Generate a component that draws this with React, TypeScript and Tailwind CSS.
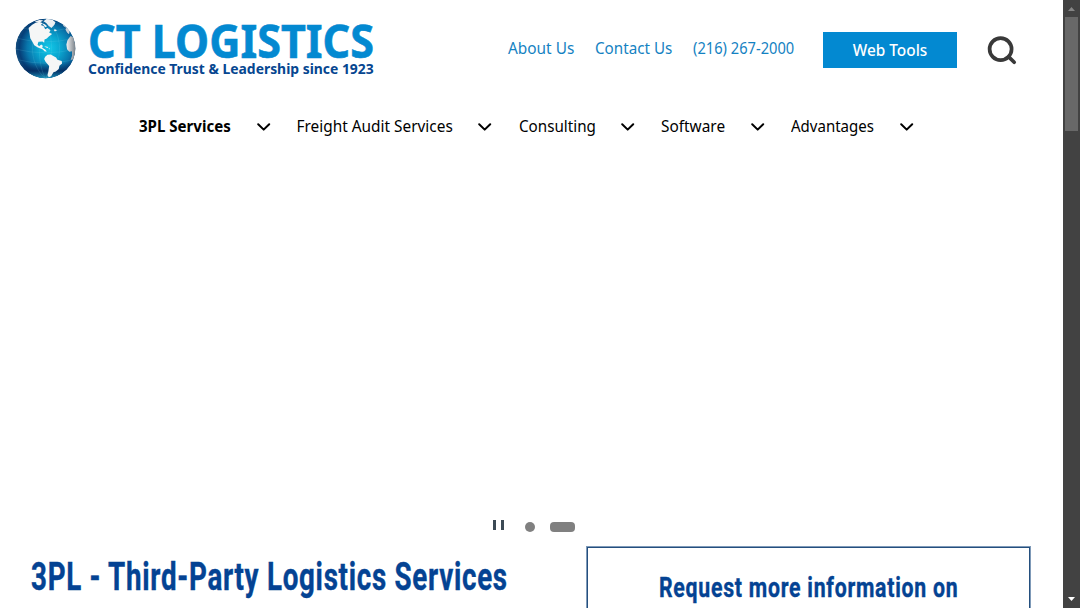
import { useLayoutEffect, useRef, useState } from "react";

/** Condenses or widens a line of text so that it fills its box exactly. */
function FitText({ text, className }: { text: string; className: string }) {
  const box = useRef<HTMLSpanElement>(null);
  const line = useRef<HTMLSpanElement>(null);
  const [scale, setScale] = useState(1);
  useLayoutEffect(() => {
    if (box.current && line.current) {
      setScale(box.current.clientWidth / line.current.offsetWidth);
    }
  }, [text]);
  return (
    <span ref={box} className={`block shrink-0 whitespace-nowrap ${className}`}>
      <span ref={line} className="inline-block origin-left align-top" style={{ transform: `scaleX(${scale})` }}>
        {text}
      </span>
    </span>
  );
}

function Globe() {
  return (
    <svg viewBox="17 23 182 184" className="h-[61px] w-[61px] shrink-0" aria-hidden="true">
      <defs>
        <radialGradient id="sea" cx="0.56" cy="0.49" r="0.56">
          <stop offset="0" stopColor="#12c8e8" />
          <stop offset="0.35" stopColor="#0aa5cf" />
          <stop offset="0.65" stopColor="#0876ac" />
          <stop offset="0.88" stopColor="#063f78" />
          <stop offset="1" stopColor="#174f7d" />
        </radialGradient>
        <linearGradient id="rim" x1="0" y1="0" x2="0" y2="1">
          <stop offset="0.72" stopColor="#042b61" stopOpacity="0" />
          <stop offset="0.87" stopColor="#04285c" stopOpacity="0.8" />
          <stop offset="1" stopColor="#209dc3" />
        </linearGradient>
        <linearGradient id="africa" x1="0" y1="0" x2="1" y2="0">
          <stop offset="0" stopColor="#f1f1f1" />
          <stop offset="1" stopColor="#68727b" />
        </linearGradient>
        <clipPath id="ball">
          <circle cx="108" cy="115" r="90" />
        </clipPath>
      </defs>
      <g clipPath="url(#ball)">
        <circle cx="108" cy="115" r="91" fill="url(#sea)" />
        <circle cx="108" cy="115" r="91" fill="url(#rim)" />
        <g fill="none" stroke="#7ed8ed" strokeOpacity="0.3" strokeWidth="1.5">
          <path d="M108 24C84 64 82 158 108 206M108 24C58 64 53 158 108 206M108 24C130 64 134 158 108 206M108 24C161 64 168 158 108 206M21 84Q108 106 195 84M18 117Q108 139 198 117M25 149Q108 170 191 149M42 54Q108 72 174 54" />
        </g>
        <path fill="#f5f6f6" d="M57 53L68 43L78 37L90 34L99 39L94 44L103 48L107 57L114 53L123 60L119 67L128 71L118 79L112 85L105 88L104 98L99 94L87 95L84 104L89 108L95 103L100 107L98 113L107 118L112 124L106 124L99 117L85 112L74 105L68 94L62 84L60 70Z" />
        <path fill="#edf0f2" d="M75 34L89 29L101 30L94 35L83 36ZM102 33L111 26L127 27L138 36L135 43L126 53L118 47L110 38ZM97 39L106 42L113 48L107 51ZM133 58L140 58L142 62L135 63Z" />
        <path fill="#f6f6f6" d="M107 140L114 134L124 133L133 138L140 142L144 149L157 153L158 160L150 167L148 177L139 184L132 187L125 199L118 202L114 196L117 183L119 168L108 155L104 147Z" />
        <path fill="url(#africa)" d="M184 77L179 83L174 91L171 103L173 117L180 125L188 123L188 137L184 150L195 147L202 113L198 85Z" />
        <path fill="#c8d0d7" d="M159 39L165 42L173 51L181 62L179 72L173 67L168 58L171 53L162 47Z" />
        <path fill="#e3edf0" d="M104 108L114 110L117 114L110 112ZM118 115L122 115L120 118Z" />
      </g>
    </svg>
  );
}

function Chevron() {
  return (
    <svg viewBox="0 0 14 8" className="h-2 w-3.5 shrink-0" fill="none" stroke="#000" strokeWidth="2" strokeLinecap="round" strokeLinejoin="round">
      <path d="M1.2 1.2L6.7 6.6L12.2 1.2" />
    </svg>
  );
}

const menu = [
  { label: "3PL Services", item: "w-[157.5px]", text: "w-[92px] font-bold" },
  { label: "Freight Audit Services", item: "w-[222px]", text: "w-[156px]" },
  { label: "Consulting", item: "w-[142.5px]", text: "w-[77px]" },
  { label: "Software", item: "w-[130px]", text: "w-[64px]" },
  { label: "Advantages", item: "w-[123px]", text: "w-[83px]" },
];

export default function App() {
  return (
    <div className="flex h-[608px] w-[1080px] overflow-hidden bg-white font-['Noto_Sans',sans-serif]">
      <main className="flex w-[1063px] flex-col">
        <header className="flex h-[100px] shrink-0 items-start pl-[15px]">
          <a href="#" className="flex w-[493px] pt-[17.5px]">
            <Globe />
            <span className="ml-3 block pt-[2.5px]">
              <FitText
                text="CT LOGISTICS"
                className="w-[286px] text-[46px] leading-[41px] font-bold text-[#0389d1] [-webkit-text-stroke:0.6px_#0389d1]"
              />
              <FitText text="Confidence Trust & Leadership since 1923" className="w-[286px] text-[13.5px] leading-[17px] font-bold text-[#064690]" />
            </span>
          </a>
          <nav className="flex h-[98px] items-center gap-[21px] text-[15.4px] leading-6 text-[#1482c2]">
            <FitText text="About Us" className="w-[65.5px]" />
            <FitText text="Contact Us" className="w-[77px]" />
            <FitText text="(216) 267-2000" className="w-[100.5px]" />
          </nav>
          <button className="mt-8 ml-[30px] flex h-9 w-[134px] items-center justify-center bg-[#0389d1] pt-0.5 text-[15.4px] font-medium text-white">
            <FitText text="Web Tools" className="w-[75px]" />
          </button>
          <svg viewBox="0 0 30 30" className="mt-[35px] ml-[30px] h-[30px] w-[30px]" fill="none" stroke="#393939" strokeLinecap="round">
            <circle cx="13.6" cy="14.1" r="11" strokeWidth="3.7" />
            <path d="M21.7 21.9L27.2 27.3" strokeWidth="3.7" />
          </svg>
        </header>

        <nav className="flex h-[53px] shrink-0 items-center pl-[139px] text-[15.4px] leading-6 text-black">
          {menu.map((m) => (
            <div key={m.label} className={`flex shrink-0 items-center gap-[25.5px] ${m.item}`}>
              <FitText text={m.label} className={m.text} />
              <Chevron />
            </div>
          ))}
        </nav>

        <section className="flex grow items-end justify-center">
          <div className="mb-[15px] ml-[5px] flex h-3 w-[82px] items-center">
            <div className="flex w-[11px] justify-between">
              <span className="h-[10px] w-[3px] bg-[#3c4a55]" />
              <span className="h-[10px] w-[3px] bg-[#3c4a55]" />
            </div>
            <span className="mt-[3px] ml-[21px] size-[10px] rounded-full bg-[#808080]" />
            <span className="mt-[3px] ml-[15px] h-[10px] w-[25px] rounded-[4px] bg-[#808080]" />
          </div>
        </section>

        <section className="flex h-[62px] shrink-0 items-start pl-[31px] font-[Roboto,sans-serif] font-bold text-[#044393]">
          <h1 className="w-[554.5px] pt-[11px]">
            <FitText
              text="3PL - Third-Party Logistics Services"
              className="w-[476.5px] text-[38px] leading-10 tracking-[1px] [-webkit-text-stroke:0.4px_#044393]"
            />
          </h1>
          <div className="flex h-[80px] w-[445.5px] justify-center border border-[#7f9ab8] pt-[25px] shadow-[inset_0_0_0_1px_#244f7e]">
            <h2>
              <FitText
                text="Request more information on"
                className="w-[299px] text-[28.5px] leading-8 tracking-[1px] [-webkit-text-stroke:0.4px_#044393]"
              />
            </h2>
          </div>
        </section>
      </main>

      <aside className="flex w-[17px] flex-col items-center bg-[#424242]">
        <svg viewBox="0 0 17 17" className="h-[17px] w-[17px]" fill="#858585">
          <path d="M5 11L8.5 7L12 11Z" />
        </svg>
        <div className="h-[114px] w-[13px] bg-[#686868]" />
        <svg viewBox="0 0 17 17" className="mt-auto h-[17px] w-[17px]" fill="#fff">
          <path d="M5 6L8.5 10L12 6Z" />
        </svg>
      </aside>
    </div>
  );
}
